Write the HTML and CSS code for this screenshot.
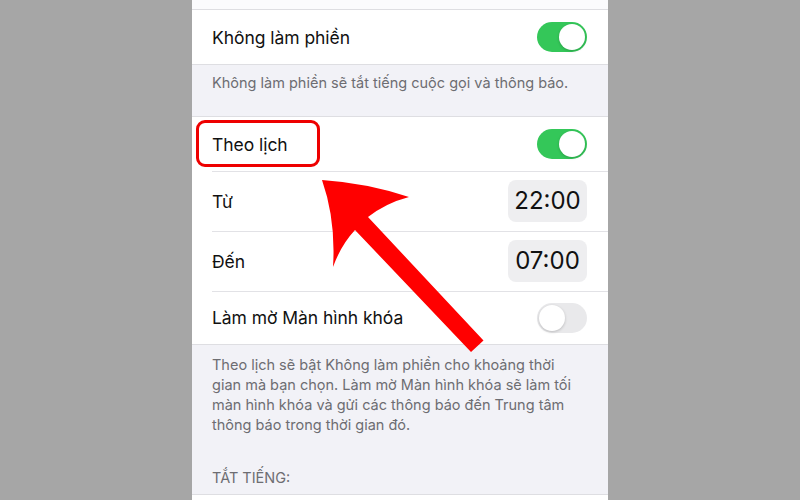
FILE: index.html
```html
<!DOCTYPE html>
<html lang="vi">
<head>
<meta charset="utf-8">
<link rel="stylesheet" href="styles.css">
</head>
<body>
<div class="phone">
  <div class="top-strip"></div>
  <div class="group">
    <div class="row row-toggle row-first">
      <span class="label">Không làm phiền</span>
      <span class="switch on"><span class="knob"></span></span>
    </div>
  </div>
  <div class="caption caption-short">Không làm phiền sẽ tắt tiếng cuộc gọi và thông báo.</div>
  <div class="group">
    <div class="row row-toggle row-theo">
      <span class="label">Theo lịch</span>
      <span class="switch on"><span class="knob"></span></span>
    </div>
    <div class="row row-time">
      <span class="label">Từ</span>
      <span class="pill">22:00</span>
    </div>
    <div class="row row-time">
      <span class="label">Đến</span>
      <span class="pill">07:00</span>
    </div>
    <div class="row row-toggle row-last">
      <span class="label">Làm mờ Màn hình khóa</span>
      <span class="switch off"><span class="knob"></span></span>
    </div>
  </div>
  <div class="caption caption-long">Theo lịch sẽ bật Không làm phiền cho khoảng thời<br>gian mà bạn chọn. Làm mờ Màn hình khóa sẽ làm tối<br>màn hình khóa và gửi các thông báo đến Trung tâm<br>thông báo trong thời gian đó.</div>
  <div class="section-head">TẮT TIẾNG:</div>
  <div class="group bottom-group"></div>

  <div class="highlight"></div>
  <svg class="arrow" width="416" height="500" viewBox="192 0 416 500">
    <path d="M322 180 Q367 183 409 197 Q386 203 368 217 L483.5 340.5 L471 352 L355 230 Q341 245 333 267 Q336 220 322 180 Z" fill="#ff0000"/>
  </svg>
</div>
</body>
</html>
```
FILE: styles.css
```css
html, body {
  margin: 0;
  padding: 0;
}
body {
  width: 800px;
  height: 500px;
  overflow: hidden;
  background: #a6a6a6;
  display: flex;
  justify-content: center;
  font-family: Inter, "Noto Sans", sans-serif;
}
.phone {
  position: relative;
  width: 416px;
  height: 500px;
  background: #f2f2f7;
  overflow: hidden;
}
.top-strip {
  height: 9px;
  background: #fbfbfd;
  border-bottom: 1px solid #dedee2;
}
.group {
  background: #ffffff;
  border-bottom: 1px solid #dedee2;
}
.caption + .group {
  border-top: 1px solid #dedee2;
}
.row {
  display: flex;
  align-items: center;
  justify-content: space-between;
  padding: 0 21px 0 20px;
  position: relative;
}
.row + .row::before {
  content: "";
  position: absolute;
  left: 20px;
  right: 0;
  top: 0;
  border-top: 1px solid #e2e2e6;
}
.row-first { height: 54px; }
.row-theo { height: 54px; }
.row-time { height: 60px; }
.row-last { height: 53px; }
.label {
  font-size: 17.5px;
  color: #111111;
  letter-spacing: -0.05px;
}
.switch {
  width: 50px;
  height: 30px;
  border-radius: 15px;
  position: relative;
}
.switch.on {
  background: #34c759;
}
.switch.off {
  background: #e9e9eb;
}
.knob {
  position: absolute;
  top: 2px;
  width: 26px;
  height: 26px;
  border-radius: 50%;
  background: #ffffff;
  box-shadow: 0 1px 3px rgba(0,0,0,0.2);
}
.switch.on .knob { right: 2px; }
.switch.off .knob { left: 2px; }
.pill {
  width: 79px;
  height: 42px;
  border-radius: 8px;
  background: #eeeef0;
  display: flex;
  align-items: center;
  justify-content: center;
  font-size: 24px;
  color: #111111;
  padding-bottom: 1px;
  box-sizing: border-box;
}
.caption {
  color: #6d6d72;
  font-size: 14.5px;
  line-height: 20px;
  padding: 0 20px;
}
.caption-short {
  padding-top: 8px;
  height: 43px;
}
.caption-long {
  padding-top: 10px;
  white-space: nowrap;
}
.section-head {
  color: #6d6d72;
  font-size: 14.5px;
  line-height: 20px;
  padding: 33px 20px 6px;
}
.bottom-group {
  border-top: 1px solid #dedee2;
  height: 20px;
}
.highlight {
  position: absolute;
  left: 4px;
  top: 120px;
  width: 124px;
  height: 47px;
  box-sizing: border-box;
  border: 3.5px solid #ee0000;
  border-radius: 9px;
}
.arrow {
  position: absolute;
  left: 0;
  top: 0;
}
```
